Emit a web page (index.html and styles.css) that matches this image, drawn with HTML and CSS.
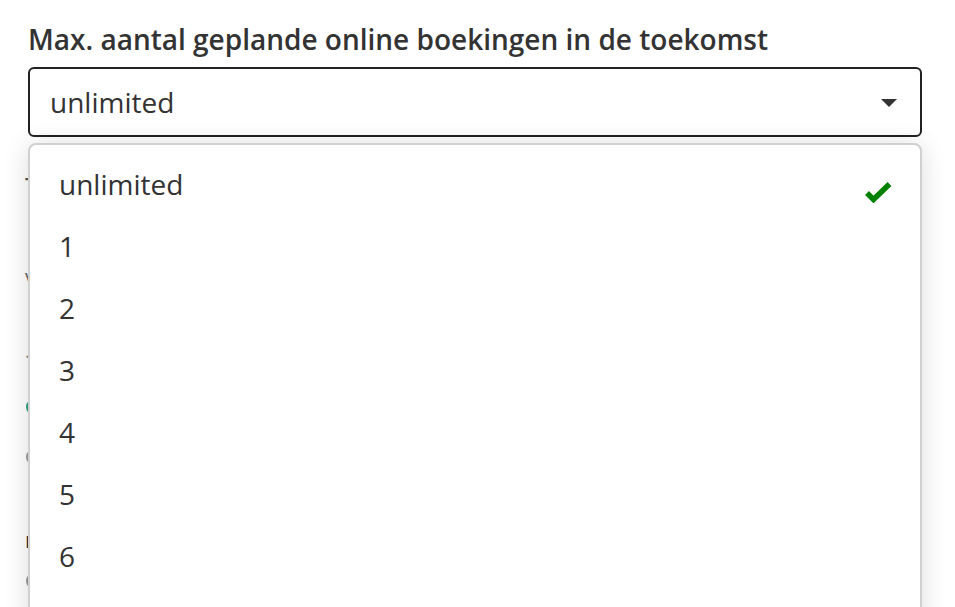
FILE: index.html
```html
<!DOCTYPE html>
<html lang="nl">
<head>
    <meta charset="UTF-8">
    <title>Online boekingen</title>
    <link rel="stylesheet" href="styles.css">
</head>
<body>
<div class="page">
    <div class="field">
        <label class="field-label">Max. aantal geplande online boekingen in de toekomst</label>
        <div class="select">
            <span class="select-value">unlimited</span>
            <span class="select-caret"></span>
        </div>

        <ul class="menu">
            <li class="menu-item selected">
                <span>unlimited</span>
                <svg class="check" width="28" height="22" viewBox="0 0 28 22">
                    <polyline points="3,12 9.5,18.5 25.5,3" fill="none" stroke="#008000" stroke-width="5.5"/>
                </svg>
            </li>
            <li class="menu-item"><span>1</span></li>
            <li class="menu-item"><span>2</span></li>
            <li class="menu-item"><span>3</span></li>
            <li class="menu-item"><span>4</span></li>
            <li class="menu-item"><span>5</span></li>
            <li class="menu-item"><span>6</span></li>
        </ul>
    </div>

    <!-- rest of the form, mostly covered by the open menu -->
    <div class="settings">
        <p class="setting-title">T</p>
        <p class="setting-text">v</p>
        <p class="setting-hint">·</p>
        <div class="option on"><span class="radio on"></span></div>
        <div class="option"><span class="radio"></span></div>
        <p class="setting-title small">r</p>
        <div class="option last"><span class="radio"></span></div>
    </div>
</div>
</body>
</html>
```

FILE: styles.css
```css
html, body {
    margin: 0;
    padding: 0;
    background: #fff;
}

body {
    font-family: "Open Sans", "Noto Sans", sans-serif;
    color: #333;
    overflow: hidden;
}

.page {
    padding: 20px 33px 0 28px;
}

.field {
    position: relative;
}

.field-label {
    display: block;
    font-size: 28px;
    line-height: 38px;
    font-weight: 600;
    color: #333;
    margin-bottom: 9px;
}

.select {
    height: 66px;
    border: 2px solid #222;
    border-radius: 6px;
    display: flex;
    align-items: center;
    justify-content: space-between;
    padding: 0 23px 0 20px;
}

.select-value {
    font-size: 28px;
    line-height: 38px;
    color: #333;
}

.select-caret {
    width: 0;
    height: 0;
    border-left: 8px solid transparent;
    border-right: 8px solid transparent;
    border-top: 8px solid #333;
    margin-top: 2px;
}

.menu {
    list-style: none;
    margin: 0;
    padding: 8px 0 0;
    position: absolute;
    top: calc(100% + 6px);
    left: 0;
    right: 0;
    height: 520px;
    background: #fff;
    border: 2px solid #d0d0d0;
    border-radius: 8px;
    box-shadow: 0 2px 26px rgba(0, 0, 0, 0.14);
    z-index: 2;
}

.menu-item {
    height: 62px;
    display: flex;
    align-items: center;
    justify-content: space-between;
    padding: 0 28px 0 29px;
    font-size: 28px;
    line-height: 38px;
    color: #333;
}

.check {
    margin-top: 16px;
}

.settings {
    margin-top: 33px;
    margin-left: -3px;
}

.settings p {
    margin: 0;
}

.setting-title {
    font-size: 22px;
    line-height: 30px;
    font-weight: 600;
    color: #555;
    height: 92px;
}

.setting-title.small {
    height: 30px;
    margin-top: 42px;
    color: #333;
}

.setting-text {
    font-size: 20px;
    line-height: 30px;
    color: #666;
    height: 80px;
}

.setting-hint {
    font-size: 20px;
    line-height: 30px;
    color: #888;
    height: 40px;
}

.option {
    display: flex;
    align-items: center;
    height: 50px;
}

.option.last {
    height: 54px;
}

.radio {
    width: 16px;
    height: 16px;
    border-radius: 50%;
    border: 2px solid #999;
    box-sizing: border-box;
    margin-left: 1px;
}

.radio.on {
    background: #2a9d7f;
    border-color: #2a9d7f;
}
```
